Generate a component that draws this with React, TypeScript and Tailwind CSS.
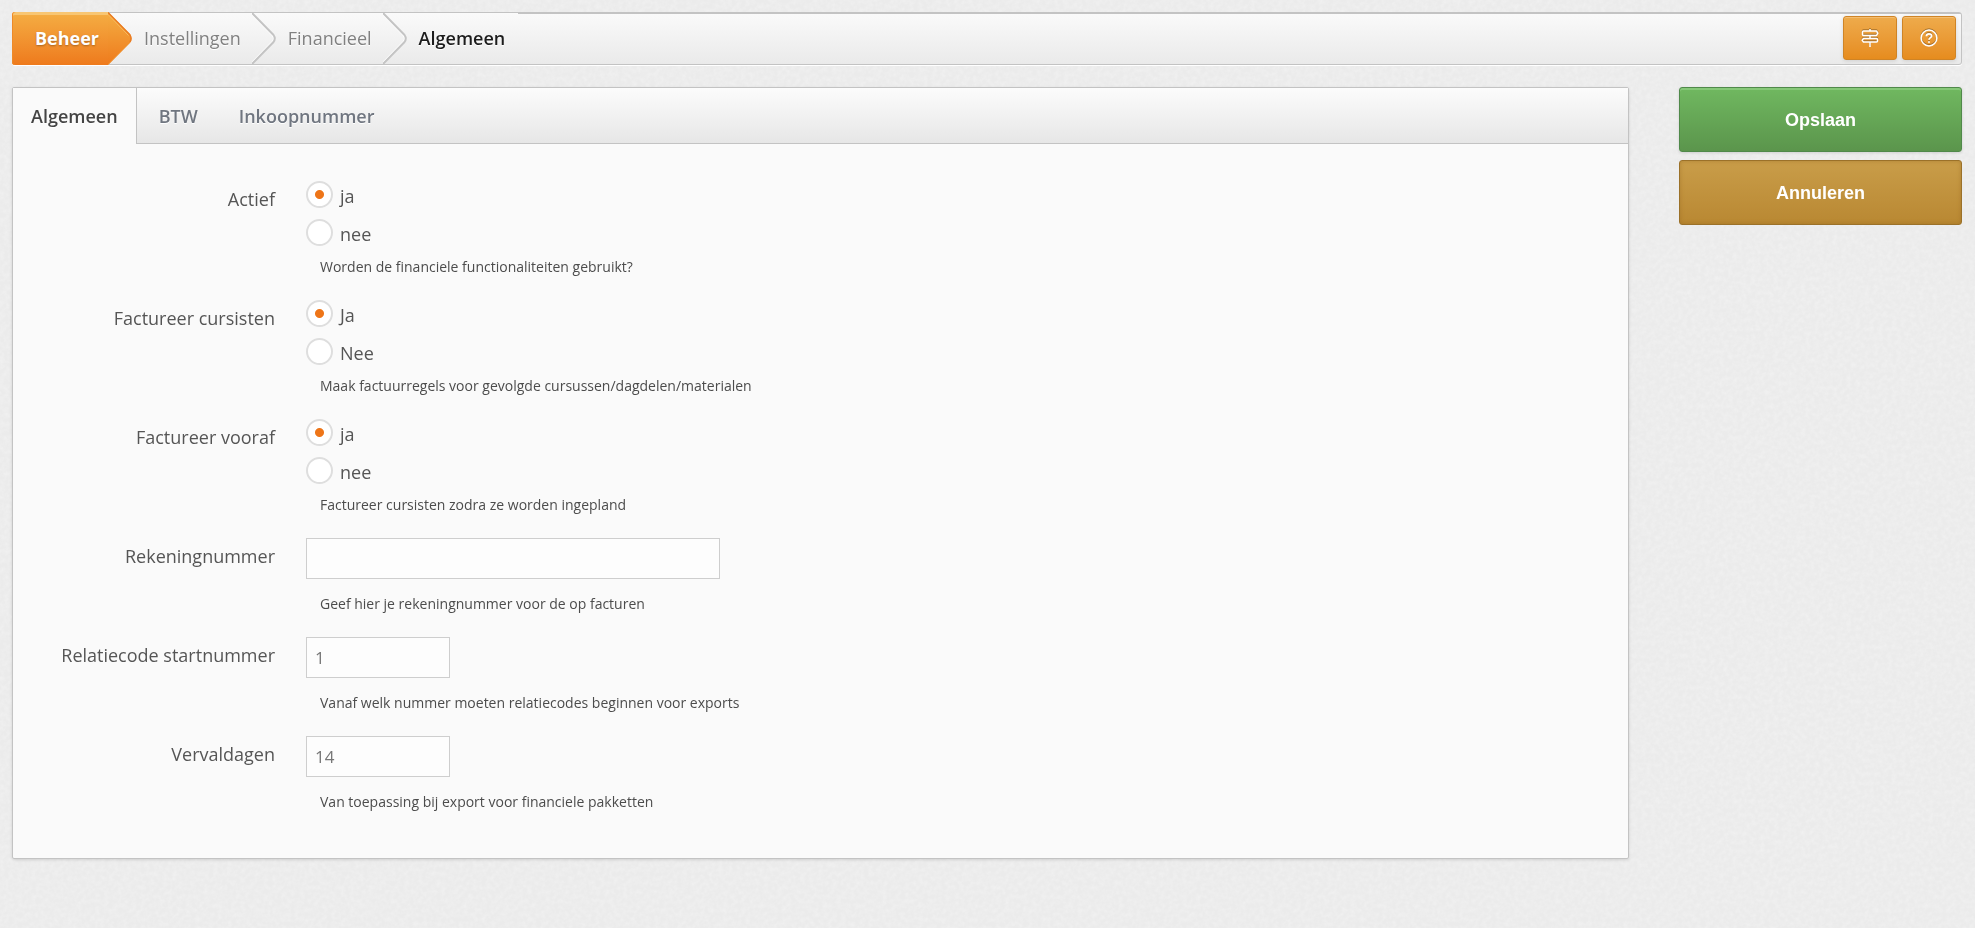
import React, { useState } from 'react';
import clsx from 'clsx';

const CRUMBS = ['Instellingen', 'Financieel'];
const TABS = ['Algemeen', 'BTW', 'Inkoopnummer'];

type Field = {
  id: string;
  label: string;
  hint: string;
  options?: string[];
  value?: string;
  wide?: boolean;
};

const FIELDS: Field[] = [
  { id: 'actief', label: 'Actief', hint: 'Worden de financiele functionaliteiten gebruikt?', options: ['ja', 'nee'] },
  { id: 'cursisten', label: 'Factureer cursisten', hint: 'Maak factuurregels voor gevolgde cursussen/dagdelen/materialen', options: ['Ja', 'Nee'] },
  { id: 'vooraf', label: 'Factureer vooraf', hint: 'Factureer cursisten zodra ze worden ingepland', options: ['ja', 'nee'] },
  { id: 'rekening', label: 'Rekeningnummer', hint: 'Geef hier je rekeningnummer voor de op facturen', value: '', wide: true },
  { id: 'relatie', label: 'Relatiecode startnummer', hint: 'Vanaf welk nummer moeten relatiecodes beginnen voor exports', value: '1' },
  { id: 'verval', label: 'Vervaldagen', hint: 'Van toepassing bij export voor financiele pakketten', value: '14' },
];

function PaperGrain() {
  return (
    <svg className="fixed inset-0 -z-10 h-full w-full" aria-hidden="true">
      <filter id="grain">
        <feTurbulence type="fractalNoise" baseFrequency="0.22" numOctaves="3" stitchTiles="stitch" />
        <feColorMatrix values="0 0 0 0 1  0 0 0 0 1  0 0 0 0 1  0.9 0 0 0 -0.25" />
      </filter>
      <rect width="100%" height="100%" filter="url(#grain)" opacity="0.5" />
    </svg>
  );
}

function Chevron() {
  return (
    <svg width="24" height="51" viewBox="0 0 24 51" fill="none" className="shrink-0" aria-hidden="true">
      <path d="M-1 0L20.5 22Q23.5 25.5 20.5 29L-1 51" stroke="#fff" strokeWidth="2" />
      <path d="M0 0L21.5 22Q24 25.5 21.5 29L0 51" stroke="#c4c4c4" strokeWidth="2" />
    </svg>
  );
}

function ArrowHead() {
  return (
    <svg width="24" height="53" viewBox="0 0 24 53" className="-my-px shrink-0" aria-hidden="true">
      <defs>
        <linearGradient id="head" x1="0" y1="0" x2="0" y2="1">
          <stop offset="0" stopColor="#f4ae43" />
          <stop offset="1" stopColor="#ee7a1c" />
        </linearGradient>
      </defs>
      <path d="M0 0L22 22Q25 26.500 22 31L0 53Z" fill="url(#head)" />
      <path d="M0 .5L22 23Q24 26.500 22 30" fill="none" stroke="#ea7c22" strokeWidth="1.5" />
      <path d="M22 30L0 52.500" fill="none" stroke="#f0922c" strokeWidth="1" />
      <path d="M0 2.500L20.500 23.500" fill="none" stroke="#f8b95c" strokeWidth="1" />
    </svg>
  );
}

function SignpostIcon() {
  return (
    <svg width="18" height="18" viewBox="0 0 18 18" fill="none" stroke="#fff" strokeWidth="1.5" strokeLinejoin="round" aria-hidden="true">
      <path d="M9 0V2M9 6.500V9.500M9 13V18" />
      <path d="M2.500 2H15.500L16.800 4.200L15.500 6.500H2.500Q1.500 6.500 1.500 5.500V3Q1.500 2 2.500 2Z" />
      <path d="M15.500 9.500H2.500L1.200 11.300L2.500 13H15.500Q16.500 13 16.500 12V10.500Q16.500 9.500 15.500 9.500Z" />
    </svg>
  );
}

function HelpIcon() {
  return (
    <svg width="18" height="18" viewBox="0 0 18 18" fill="none" stroke="#fff" strokeWidth="1.5" aria-hidden="true">
      <circle cx="9" cy="9" r="7.900" />
      <path d="M6.400 7.200C6.400 5.600 7.500 4.800 9 4.800S11.600 5.600 11.600 6.900C11.600 8.700 9 8.700 9 10.800" strokeWidth="1.700" />
      <path d="M9 12.200V13.800" strokeWidth="1.800" />
    </svg>
  );
}

function IconButton({ label, children }: { label: string; children: React.ReactNode }) {
  return (
    <button
      aria-label={label}
      className="flex h-11 w-[54px] items-center justify-center rounded-[3px] border border-[#cf8426] bg-linear-to-b from-[#eeab4b] to-[#e68c1d] shadow-[inset_0_1px_0_#f3bd70,0_1px_4px_rgba(0,0,0,0.12)] [&>svg]:drop-shadow-[0_-1px_0_rgba(0,0,0,0.3)]"
    >
      {children}
    </button>
  );
}

function FieldRow({ field }: { field: Field }) {
  const [choice, setChoice] = useState(field.options?.[0]);
  const hintId = `${field.id}-hint`;

  return (
    <div
      role={field.options ? 'radiogroup' : undefined}
      aria-labelledby={field.options ? `${field.id}-label` : undefined}
      className="flex gap-[31px] pb-[23px]"
    >
      <div className="w-[262px] shrink-0 pt-[6px] text-right">
        {field.options ? <span id={`${field.id}-label`}>{field.label}</span> : <label htmlFor={field.id}>{field.label}</label>}
      </div>
      <div className="min-w-0 flex-1">
        {field.options ? (
          field.options.map((option) => (
            <label key={option} className="flex h-[38px] w-fit items-start gap-[7px]">
              <input
                type="radio"
                name={field.id}
                checked={choice === option}
                onChange={() => setChoice(option)}
                className="size-[27px] appearance-none rounded-full border-2 border-[#dedede] bg-white checked:bg-[radial-gradient(circle,#ee7518_4px,#fff_5px)]"
              />
              <span className="pt-[3px]">{option}</span>
            </label>
          ))
        ) : (
          <input
            id={field.id}
            type="text"
            defaultValue={field.value}
            aria-describedby={hintId}
            className={clsx(
              'mb-[15px] block h-[41px] max-w-full border border-[#cecece] bg-[#fdfdfd] px-2 text-[17px] text-[#777]',
              field.wide ? 'w-[414px]' : 'w-36'
            )}
          />
        )}
        <p id={hintId} className="pl-[14px] text-sm leading-5 text-[#4c4c4c]">{field.hint}</p>
      </div>
    </div>
  );
}

export default function App() {
  const [activeTab, setActiveTab] = useState('Algemeen');

  return (
    <div className="relative isolate min-h-screen bg-[#ebebeb] p-3 pr-[13px] font-['Open_Sans',sans-serif] text-lg leading-6 text-[#555]">
      <PaperGrain />

      {/* Breadcrumb bar */}
      <header className="flex h-[53px] rounded-[3px] border border-[#c3c3c3] bg-linear-to-b from-[#fafafa] to-[#eaeaea] shadow-[0_1px_0_#fff]">
        <nav aria-label="Kruimelpad" className="flex items-center pr-[13px] [text-shadow:0_1px_0_#fff]">
          <a
            href="#beheer"
            className="-my-px -ml-px flex h-[53px] w-24 items-center rounded-l-[3px] bg-linear-to-b from-[#f4ae43] to-[#ee7a1c] pb-[2px] pl-[23px] font-bold text-white shadow-[inset_1px_0_0_#ee8a28,inset_0_3px_0_#f8c673] [text-shadow:0_1px_2px_rgba(0,0,0,0.3)]"
          >
            Beheer
          </a>
          <ArrowHead />
          {CRUMBS.map((crumb) => (
            <React.Fragment key={crumb}>
              <a href={`#${crumb.toLowerCase()}`} className="pr-[11px] pb-[2px] pl-3 text-[#808080]">{crumb}</a>
              <Chevron />
            </React.Fragment>
          ))}
          <span aria-current="page" className="pb-[2px] pl-3 font-semibold text-[#1c1c1c]">Algemeen</span>
        </nav>
        <div className="flex flex-1 items-start justify-end gap-[5px] border-t border-[#c3c3c3] pt-[2px] pr-[5px]">
          <IconButton label="Rondleiding"><SignpostIcon /></IconButton>
          <IconButton label="Help"><HelpIcon /></IconButton>
        </div>
      </header>

      <div className="mt-[22px] flex items-start gap-[50px]">
        {/* Settings panel */}
        <main className="min-w-0 flex-1 rounded-[2px] border border-[#c3c3c3] bg-[#fafafa] shadow-[0_1px_3px_rgba(0,0,0,0.12)]">
          <div role="tablist" className="flex h-14 bg-linear-to-b from-[#fcfcfc] to-[#e6e6e6]">
            {TABS.map((tab) => (
              <button
                key={tab}
                role="tab"
                aria-selected={tab === activeTab}
                onClick={() => setActiveTab(tab)}
                className={clsx(
                  'font-semibold [text-shadow:0_1px_0_#fff]',
                  tab === activeTab
                    ? 'border-r border-[#c3c3c3] bg-[#fafafa] px-[18px] text-[#444]'
                    : 'border-b border-[#c3c3c3] pr-[19px] pl-[22px] text-[#707680]'
                )}
              >
                {tab}
              </button>
            ))}
            <div className="flex-1 border-b border-[#c3c3c3]" />
          </div>
          <form className="pt-[37px] pb-[23px]" onSubmit={(e) => e.preventDefault()}>
            {FIELDS.map((field) => (
              <FieldRow key={field.id} field={field} />
            ))}
          </form>
        </main>

        {/* Actions */}
        <aside className="flex w-[283px] shrink-0 flex-col gap-2 font-['Liberation_Sans',Arial,sans-serif] font-bold text-white [text-shadow:0_-1px_1px_rgba(0,0,0,0.5)]">
          <button className="h-[65px] rounded-[3px] border border-[#50894a] bg-linear-to-b from-[#70b860] to-[#5b954c] shadow-[inset_0_2px_0_#86c878,0_1px_3px_rgba(0,0,0,0.12)]">
            Opslaan
          </button>
          <button className="h-[65px] rounded-[3px] border border-[#9b7129] bg-linear-to-b from-[#c99d49] to-[#b98832] shadow-[inset_0_0_4px_rgba(140,95,25,0.4)]">
            Annuleren
          </button>
        </aside>
      </div>
    </div>
  );
}
